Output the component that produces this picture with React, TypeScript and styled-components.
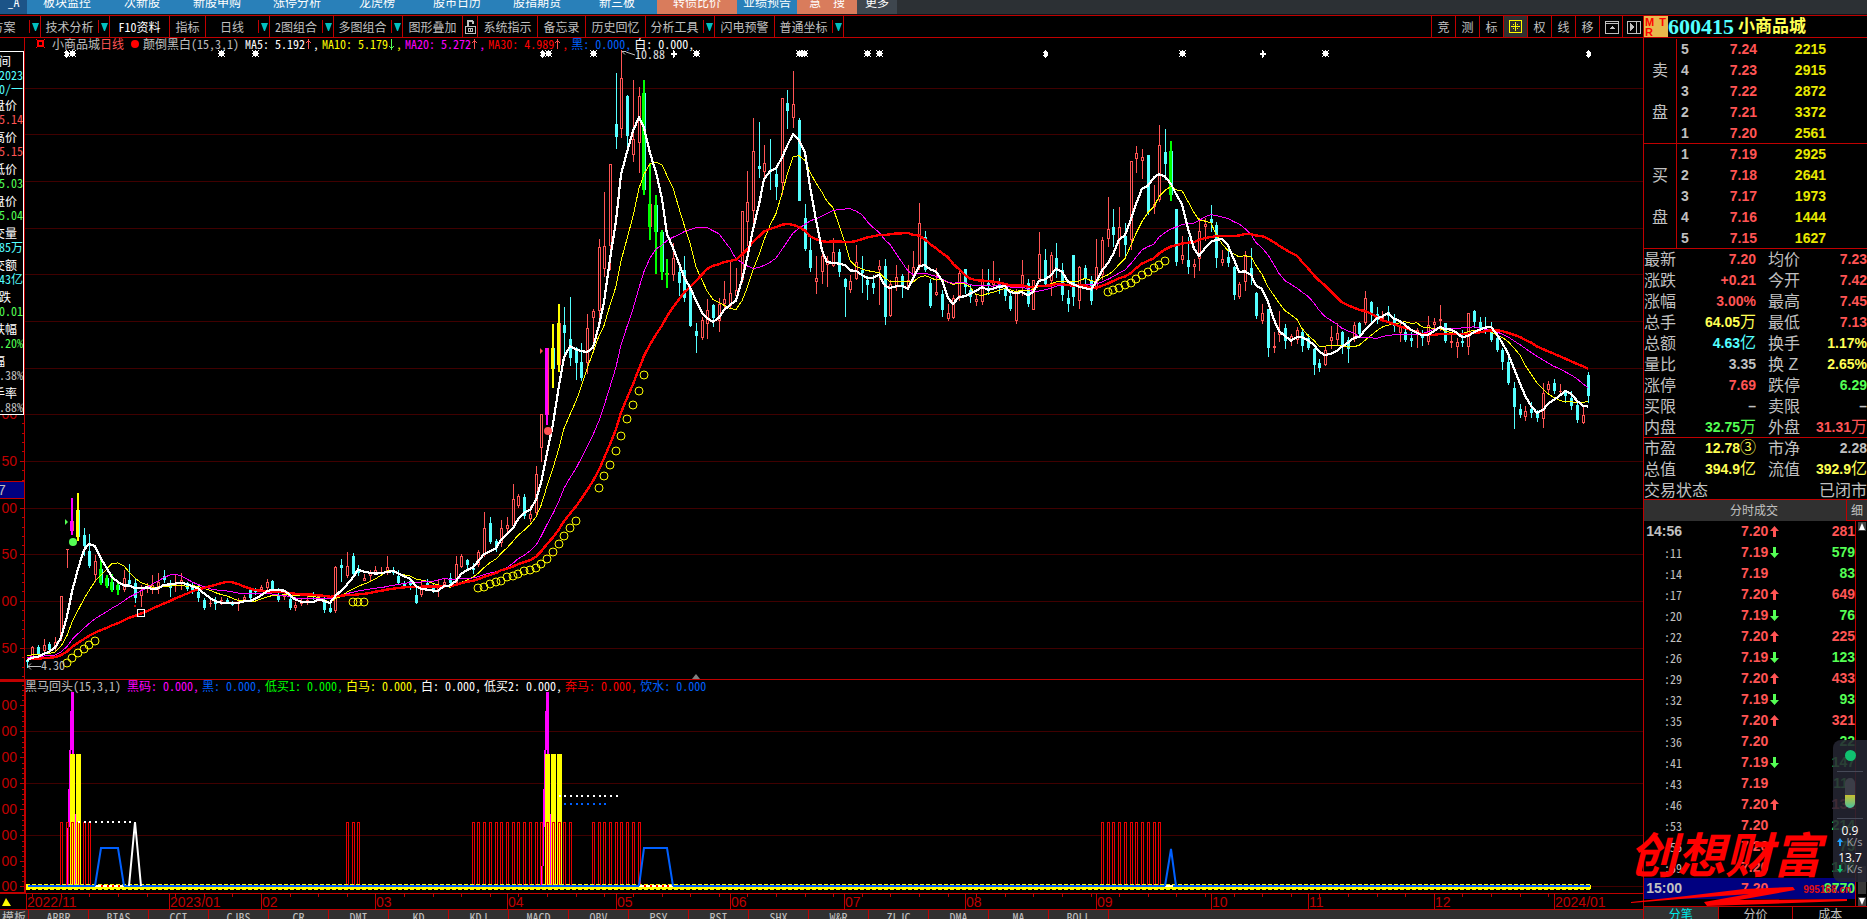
import React from "react";
import styled, { createGlobalStyle } from "styled-components";

const RED = "#c00000";
const SALMON = "#ff5454";
const CYAN = "#54ffff";
const GREEN = "#54ff54";
const YELLOW = "#ffff54";
const GRAY = "#c0c0c0";
const MONO = `"Noto Sans Mono CJK SC", "Liberation Mono", "Noto Sans CJK SC", monospace`;
const SANS = `"Liberation Sans", "Noto Sans CJK SC", sans-serif`;

const GlobalStyle = createGlobalStyle`
  *, *::before, *::after { box-sizing: border-box; }
  html, body { margin: 0; background: #000; }
  body { font-family: ${SANS}; font-size: 12px; color: ${GRAY}; }
  button { margin: 0; padding: 0; border: 0; background: none; color: inherit; font: inherit; }
  table { border-collapse: collapse; border-spacing: 0; }
  td, th { padding: 0; font-weight: inherit; }
`;

/* ---------- page frame ---------- */

const Page = styled.div`
  position: relative;
  display: flex;
  flex-direction: column;
  height: 100vh;
  overflow: hidden;
  background: #000;
`;

const MenuBar = styled.nav`
  display: flex;
  align-items: stretch;
  flex: none;
  height: 15px;
  overflow: hidden;
  background: #2c3034;
  border-bottom: 1px solid #101418;
`;

const MenuItem = styled.button<{ $w: number; $bg: string }>`
  width: ${(p) => p.$w}px;
  background: ${(p) => p.$bg};
  color: #fff;
  font-family: ${MONO};
  line-height: 16px;
  height: 16px;
  margin-top: -6px;
  padding-bottom: 6px;
  box-sizing: content-box;
  white-space: pre;
`;

const Body = styled.div`
  display: flex;
  flex: 1;
  min-height: 0;
  border-top: 1px solid ${RED};
`;

const Workspace = styled.main`
  display: flex;
  flex-direction: column;
  flex: 1;
  min-width: 0;
  overflow: hidden;
`;

/* ---------- tool bar ---------- */

const ToolBar = styled.div`
  display: flex;
  flex: none;
  height: 22px;
  margin-left: -22px;
  border-bottom: 1px solid ${RED};
  font-family: ${MONO};
`;

const Tool = styled.button<{ $w: number; $bright?: boolean }>`
  display: flex;
  align-items: center;
  justify-content: center;
  flex: none;
  width: ${(p) => p.$w}px;
  border-right: 1px solid ${RED};
  color: ${(p) => (p.$bright ? "#fff" : GRAY)};
  white-space: nowrap;
`;

const ToolText = styled.span`
  flex: 1;
  text-align: center;
`;

const Drop = styled.span`
  display: flex;
  align-items: center;
  justify-content: center;
  width: 11px;
  height: 13px;
  border-left: 1px solid ${RED};
`;

const Spacer = styled.div`
  flex: 1;
`;

const IconTool = styled.button<{ $on?: boolean }>`
  display: flex;
  align-items: center;
  justify-content: center;
  flex: none;
  width: 24px;
  border-left: 1px solid ${RED};
  background: ${(p) => (p.$on ? "#303030" : "none")};
  &:nth-last-child(2) { width: 23px; }
  &:last-child { width: 21px; }
`;

/* ---------- charts ---------- */

const PricePanel = styled.section`
  position: relative;
  flex: 1;
  min-height: 0;
  border-bottom: 1px solid ${RED};
  overflow: hidden;
`;

const SubPanel = styled.section`
  position: relative;
  flex: none;
  height: 213px;
  overflow: hidden;
`;

const DateAxis = styled.div`
  flex: none;
  height: 17px;
  border-top: 1px solid ${RED};
  border-bottom: 1px solid ${RED};
  overflow: hidden;
`;

const Plot = styled.svg`
  display: block;
  width: 100%;
  height: 100%;
`;

const Legend = styled.div<{ $left: number }>`
  position: absolute;
  top: 0;
  left: ${(p) => p.$left}px;
  display: flex;
  gap: 3px;
  height: 12px;
  line-height: 12px;
  font-family: ${MONO};
  white-space: pre;
`;

const LegendItem = styled.span<{ $c: string }>`
  display: flex;
  align-items: center;
  color: ${(p) => p.$c};
`;

const LegendTitle = styled(LegendItem)`
  margin-right: 3px;
`;

const Period = styled.span`
  color: ${SALMON};
`;

const InfoBox = styled.div`
  position: absolute;
  left: 0;
  top: 13px;
  width: 24px;
  height: 364px;
  padding-top: 2px;
  background: #000;
  border: 1px solid #fff;
  border-left: 0;
  font-family: ${MONO};
  overflow: hidden;
`;

const InfoGroup = styled.div<{ $first?: boolean }>`
  display: flex;
  flex-direction: column;
  align-items: flex-end;
  margin-bottom: ${(p) => (p.$first ? 2 : 4)}px;
  line-height: 14px;
  white-space: nowrap;
`;

const InfoLabel = styled.span<{ $inset: number }>`
  margin-right: ${(p) => p.$inset}px;
  color: #fff;
`;

const InfoValue = styled.span<{ $c: string }>`
  color: ${(p) => p.$c};
`;

const Tabs = styled.div`
  display: flex;
  flex: none;
  height: 9px;
  overflow: hidden;
  background: #303030;
  font-family: ${MONO};
`;

const Tab = styled.button<{ $w: number }>`
  flex: none;
  width: ${(p) => p.$w}px;
  height: 18px;
  line-height: 14px;
  padding-bottom: 4px;
  border-right: 1px solid ${RED};
`;

/* ---------- quote panel ---------- */

const Quote = styled.aside`
  display: flex;
  flex-direction: column;
  flex: none;
  width: 224px;
  border-left: 1px solid ${RED};
`;

const QuoteHead = styled.header`
  display: flex;
  align-items: center;
  flex: none;
  height: 22px;
  border-bottom: 1px solid ${RED};
`;

const Badge = styled.div`
  display: grid;
  grid-template-columns: 1fr 1fr;
  width: 24px;
  height: 21px;
  padding: 1px;
  background: #e8b84c;
  color: #ff0000;
  font-size: 11px;
  font-weight: bold;
  line-height: 10px;
`;

const BadgeRight = styled.span`
  text-align: right;
  padding-right: 1px;
`;

const Code = styled.h1`
  margin: 0 4px 0 0;
  color: ${CYAN};
  font-family: "Liberation Serif", serif;
  font-size: 22px;
  line-height: 21px;
`;

const Name = styled.h2`
  margin: 0;
  color: ${YELLOW};
  font-size: 17px;
  line-height: 21px;
`;

const Book = styled.section`
  display: flex;
  flex: none;
  height: 105px;
  border-bottom: 1px solid ${RED};
  &:first-of-type { height: 106px; padding-top: 1px; }
`;

const BookSide = styled.div`
  display: flex;
  flex-direction: column;
  align-items: center;
  gap: 21px;
  width: 33px;
  padding-top: 21px;
  border-right: 1px solid ${RED};
  font-size: 16px;
  line-height: 21px;
`;

const BookTable = styled.table`
  width: 149px;
  height: 105px;
  table-layout: fixed;
  font-size: 14px;
  font-weight: bold;
  line-height: 21px;
`;

const Cell = styled.td<{ $c?: string; $align?: string; $pad?: number }>`
  height: 21px;
  text-align: ${(p) => p.$align || "right"};
  color: ${(p) => p.$c || GRAY};
  padding-left: ${(p) => p.$pad || 0}px;
  white-space: nowrap;
`;

const Col = styled.col<{ $w: number }>`
  width: ${(p) => p.$w}px;
`;

const Stats = styled.section<{ $h: number }>`
  flex: none;
  height: ${(p) => p.$h}px;
  border-bottom: 1px solid ${RED};
  overflow: hidden;
`;

const StatTable = styled.table`
  width: 100%;
  table-layout: fixed;
  font-size: 14px;
  font-weight: bold;
  line-height: 21px;
`;

const StatLabel = styled.th<{ $pad?: number }>`
  height: 21px;
  padding-left: ${(p) => p.$pad || 0}px;
  text-align: left;
  font-size: 16px;
  font-weight: normal;
  white-space: pre;
`;

const Unit = styled.span`
  font-size: 16px;
  font-weight: normal;
  line-height: 16px;
`;

const StateRow = styled.div`
  display: flex;
  justify-content: space-between;
  font-size: 16px;
  line-height: 21px;
`;

const DealHead = styled.div`
  display: flex;
  flex: none;
  height: 21px;
  background: #303030;
  line-height: 22px;
  text-align: center;
`;

const DealTitle = styled.div`
  flex: 1;
  padding-left: 18px;
`;

const DetailButton = styled.button`
  width: 21px;
  border-left: 1px solid ${RED};
  border-bottom: 1px solid ${RED};
`;

const DealArea = styled.section`
  display: flex;
  flex: 1;
  min-height: 0;
`;

const DealTable = styled.table`
  width: 211px;
  height: 378px;
  table-layout: fixed;
  font-size: 14px;
  font-weight: bold;
  line-height: 21px;
`;

const DealRow = styled.tr<{ $last?: boolean }>`
  background: ${(p) => (p.$last ? "#000080" : "none")};
`;

const TimeCell = styled(Cell)<{ $small: boolean }>`
  font-family: ${(p) => (p.$small ? MONO : SANS)};
  font-size: ${(p) => (p.$small ? 12 : 14)}px;
  font-weight: ${(p) => (p.$small ? "normal" : "bold")};
`;

const DealPrice = styled.span`
  display: flex;
  align-items: center;
  gap: 2px;
  height: 21px;
`;

const Scroll = styled.div`
  display: flex;
  flex-direction: column;
  justify-content: space-between;
  align-items: center;
  flex: 1;
  padding-top: 1px;
  border-left: 1px solid ${RED};
`;

const ScrollButton = styled.button`
  display: flex;
  width: 8px;
  height: 9px;
  background: #404040;
  align-items: center;
  justify-content: center;
`;

const Thumb = styled.div`
  width: 8px;
  height: 28px;
  margin: auto 0 3px;
  background: #383838;
`;

const QuoteTabs = styled.div`
  display: flex;
  flex: none;
  height: 13px;
  overflow: hidden;
  border-top: 1px solid ${RED};
`;

const QuoteTab = styled.button<{ $on?: boolean }>`
  flex: 1;
  height: 17px;
  line-height: 15px;
  border-right: 1px solid ${RED};
  background: ${(p) => (p.$on ? "#303030" : "none")};
  color: ${(p) => (p.$on ? "#00e8e8" : GRAY)};
  &:last-child { border-right: 0; }
`;

/* ---------- floating parts ---------- */

const Monitor = styled.div`
  position: absolute;
  right: 0;
  bottom: 37px;
  display: flex;
  flex-direction: column;
  align-items: center;
  width: 34px;
  height: 142px;
  padding-top: 10px;
  border-radius: 8px 0 0 8px;
  background: rgba(36, 38, 50, 0.88);
  color: #fff;
`;

const Dot = styled.div`
  width: 11px;
  height: 11px;
  border-radius: 6px;
  background: #10c070;
`;

const Rule = styled.div`
  width: 26px;
  height: 1px;
  margin: 10px 0 6px;
  background: #464a58;
`;

const Gauge = styled.div`
  display: flex;
  align-items: flex-end;
  width: 10px;
  height: 30px;
  border-radius: 5px;
  background: #3c3e48;
  overflow: hidden;
`;

const GaugeFill = styled.div`
  width: 10px;
  height: 13px;
  background: linear-gradient(#c8c030, #48c0a0);
`;

const Rate = styled.div<{ $unit?: boolean }>`
  display: flex;
  align-items: center;
  gap: 3px;
  font-family: "Open Sans", sans-serif;
  font-size: ${(p) => (p.$unit ? 11 : 12)}px;
  line-height: ${(p) => (p.$unit ? 10 : 12)}px;
  margin-bottom: ${(p) => (p.$unit ? 5 : 0)}px;
  color: ${(p) => (p.$unit ? "#a0a0a8" : "#fff")};
`;

const Stamp = styled.div`
  position: absolute;
  right: 16px;
  bottom: 10px;
  width: 222px;
  height: 88px;
  color: #ff0000;
`;

const StampText = styled.div`
  font-family: "Noto Sans CJK SC", sans-serif;
  font-size: 48px;
  font-weight: bold;
  font-style: italic;
  line-height: 62px;
`;

const StampStroke = styled.svg`
  position: absolute;
  left: 0;
  bottom: 0;
`;

const StampUrl = styled.a`
  position: absolute;
  right: 0;
  bottom: 12px;
  color: #e01010;
  font-size: 10px;
  font-weight: bold;
  line-height: 14px;
  text-decoration: none;
`;

/* ---------- data ---------- */

// high, body top, body bottom, low, kind (r rise, c fall; m, y, Y, g, G are marked bars)
const RAW = `658 660 662 668 c|646 647 658 660 r|645 647 655 656 c|639 645 651 654 r|642 644 650 652 c|637 642 648 651 r|596 596 637 641 r|549 549 550 568 r|498 521 531 535 m|493 510 537 541 y
528 535 546 556 c|534 551 566 568 c|555 561 575 582 r|557 569 583 585 g|575 578 586 588 g|574 582 590 592 g|581 585 590 595 g|570 578 590 592 r|564 580 584 587 c|579 583 598 603 c
585 590 596 607 r|583 587 588 593 r|575 585 588 594 r|573 582 588 594 r|570 576 580 583 c|580 585 588 597 c|575 583 585 592 r|573 580 583 590 r|582 583 589 591 c|583 586 592 594 c
585 592 598 602 c|598 600 608 610 c|599 603 604 607 r|597 602 604 610 c|597 600 601 605 r|598 600 602 604 c|601 604 605 606 c|598 603 604 611 r|595 597 600 602 r|587 589 598 601 c
588 590 592 595 c|585 587 590 591 r|579 582 588 590 r|580 581 590 592 c|588 595 600 602 c|592 594 597 600 r|597 599 608 610 c|602 605 608 611 r|598 601 604 606 r|594 600 603 605 r
592 594 597 600 c|594 596 599 601 r|595 602 610 613 c|602 608 612 613 c|566 567 611 613 r|559 565 568 582 c|552 566 576 578 r|553 556 574 577 c|565 569 573 576 c|574 578 581 581 r
570 573 576 582 r|566 570 573 575 r|567 572 573 575 r|556 567 572 575 r|567 572 573 575 c|570 576 583 585 c|581 583 586 588 c|578 581 585 590 c|588 595 603 604 c|582 588 595 597 r
579 583 586 588 c|584 587 591 593 c|580 585 590 597 r|578 582 585 587 r|573 578 583 587 c|556 564 583 585 r|554 556 567 568 r|559 560 565 570 c|563 568 570 574 c|550 552 565 567 r
512 528 555 557 r|517 523 542 544 c|539 541 548 552 c|520 528 543 547 r|517 525 529 532 r|484 499 526 528 r|494 496 506 508 r|494 497 516 519 c|506 514 519 522 r|466 474 513 515 r
414 414 448 462 r|348 348 415 425 m|324 348 369 388 y|304 323 365 372 Y|307 325 333 358 c|297 339 358 366 c|347 348 363 380 c|343 362 378 381 c|314 328 363 374 r|309 311 318 350 r
239 247 311 320 r|192 246 269 277 r|164 164 246 270 r|73 124 137 149 c|50 78 129 138 r|95 96 136 148 c|80 139 155 162 r|87 96 143 173 r|80 93 190 195 g|163 204 227 240 G
195 205 232 274 g|230 232 272 280 g|259 273 275 288 G|243 258 275 281 r|265 272 283 296 c|256 270 298 302 c|289 289 326 327 c|323 331 336 353 c|317 320 338 340 r|299 310 324 339 r
304 305 318 327 c|298 304 321 332 r|281 299 304 308 r|262 293 306 309 r|268 290 296 301 r|211 211 280 283 r|171 202 222 246 r|118 151 211 228 r|122 166 169 178 c|145 163 172 178 r
139 170 171 190 c|168 174 187 200 c|98 98 183 195 r|90 103 111 129 c|71 104 118 128 r|118 120 201 201 c|204 218 249 251 c|238 250 268 272 c|256 278 282 294 r|252 256 272 284 r
256 260 265 287 r|238 252 266 267 r|249 252 272 277 c|278 279 287 317 c|275 281 290 293 r|245 262 279 280 r|256 270 273 293 c|276 280 285 300 c|275 283 288 294 c|260 266 270 305 r
259 266 317 325 c|280 284 316 317 r|265 277 287 291 r|274 276 285 298 c|265 280 287 288 r|251 267 276 281 r|203 223 265 270 r|231 237 270 272 c|279 283 306 308 c|268 292 295 296 r
290 294 310 317 c|304 313 319 321 r|295 298 318 319 r|269 273 296 301 r|269 269 287 294 c|284 290 297 303 c|295 299 302 306 r|269 280 302 305 r|269 283 286 295 c|261 281 285 288 r
278 284 288 294 c|285 289 296 301 c|292 296 309 311 c|289 292 321 324 r|260 275 288 296 r|279 283 304 307 c|280 280 310 310 r|232 254 279 282 r|249 260 284 286 c|252 255 281 296 r
243 258 270 278 c|263 270 295 301 c|290 298 304 312 c|255 255 297 306 c|266 267 301 309 r|265 268 278 284 c|276 281 301 305 c|239 267 288 290 r|237 240 275 280 r|197 229 239 247 r
209 227 235 247 c|207 227 240 257 r|223 236 245 258 c|161 161 240 250 r|146 153 159 173 r|149 157 161 179 r|155 155 212 215 c|185 204 207 214 r|125 145 200 202 r|129 152 164 180 c
141 151 195 201 g|209 209 262 266 c|236 255 260 264 r|237 260 267 274 c|259 264 267 278 r|218 231 259 271 r|218 224 227 241 r|205 219 223 232 c|222 225 258 268 c|250 259 263 266 r
247 257 263 267 c|266 267 295 300 c|282 284 297 299 r|251 256 282 291 r|248 268 276 285 c|292 293 316 319 c|304 313 321 324 r|309 309 348 357 c|332 346 348 353 r|311 332 335 342 r
324 328 341 349 c|334 336 341 346 r|327 330 340 344 r|328 332 346 352 c|334 338 348 350 c|348 349 365 375 c|359 363 368 372 c|346 350 365 366 r|326 337 341 349 r|323 333 340 346 r
331 332 345 354 c|337 340 349 363 c|322 325 337 342 r|322 323 334 338 c|291 298 323 325 r|301 302 315 324 c|307 314 320 324 c|311 316 319 322 r|306 312 316 322 c|314 318 326 332 c
322 327 333 342 r|323 332 340 342 c|332 338 341 347 c|328 330 333 348 r|330 334 338 346 c|316 325 342 345 r|318 322 325 332 r|305 319 321 331 r|323 323 341 343 c|333 341 343 348 r
338 342 347 358 r|330 341 343 347 c|313 313 347 355 r|310 311 322 328 c|317 322 328 333 c|317 327 332 334 c|322 330 340 342 c|334 338 350 352 c|348 350 362 370 c|356 362 383 385 c
382 388 407 429 c|404 409 415 418 c|406 411 417 421 r|402 409 413 418 c|410 413 418 422 c|383 393 419 428 r|381 384 390 395 r|379 383 391 394 c|384 391 392 395 r|392 393 396 403 c
391 398 406 410 c|403 405 420 423 c|406 415 423 424 r|372 375 396 403 c`;

type Candle = { high: number; top: number; bot: number; low: number; kind: string };

const CANDLES: Candle[] = RAW.split(/[|\n]/).map((s) => {
  const p = s.trim().split(" ");
  return { high: +p[0], top: +p[1], bot: +p[2], low: +p[3], kind: p[4] };
});

const STEP = 5.7209;
const cx = (i: number) => Math.round(26.5 + i * STEP);
const CLOSES = CANDLES.map((c) => ("rmYG".includes(c.kind) ? c.top : c.bot));

function average(n: number, before: number) {
  return CLOSES.map((_, i) => {
    let sum = 0;
    for (let k = i - n + 1; k <= i; k++) sum += k < 0 ? before : CLOSES[k];
    return `${cx(i)},${(sum / n).toFixed(1)}`;
  }).join(" ");
}

const GRID = [88, 134, 181, 228, 274, 321, 368, 414, 461, 508, 554, 601, 648];

const RINGS: [number, number[]][] = [
  [7, [663, 658, 653, 649, 645, 641]],
  [57, [602, 602, 602]],
  [79, [588, 587, 584, 582, 581, 577, 576, 574, 571, 570, 568, 564, 559, 552, 544, 536, 528, 521]],
  [100, [488, 476, 465, 451, 436, 419, 405, 391, 375]],
  [189, [292, 290, 288, 285, 283, 279, 275, 272, 268, 265, 261]],
];

const STARS: [number, string][] = [
  [66, "d"], [72, "s"], [221, "s"], [255, "s"], [542, "d"], [548, "s"], [593, "s"], [673, "p"], [696, "s"],
  [799, "s"], [804, "s"], [867, "s"], [879, "s"], [1045, "d"], [1182, "s"], [1262, "p"], [1325, "s"], [1588, "d"],
];

const MONTHS: [number, string][] = [
  [26, "2022/11"], [169, "2023/01"], [261, "02"], [375, "03"], [507, "04"], [616, "05"], [730, "06"], [844, "07"],
  [965, "08"], [1096, "09"], [1211, "10"], [1308, "11"], [1434, "12"], [1554, "2024/01"],
];

const RED_RUNS: [number, number][] = [[6, 11], [56, 58], [78, 95], [99, 107], [188, 198]];

const SELL = [["5", "7.24", "2215"], ["4", "7.23", "2915"], ["3", "7.22", "2872"], ["2", "7.21", "3372"], ["1", "7.20", "2561"]];
const BUY = [["1", "7.19", "2925"], ["2", "7.18", "2641"], ["3", "7.17", "1973"], ["4", "7.16", "1444"], ["5", "7.15", "1627"]];

type Stat = [string, string, string, string, string, string];
const STATS_A: Stat[] = [
  ["最新", "7.20", SALMON, "均价", "7.23", SALMON],
  ["涨跌", "+0.21", SALMON, "今开", "7.42", SALMON],
  ["涨幅", "3.00%", SALMON, "最高", "7.45", SALMON],
  ["总手", "64.05万", YELLOW, "最低", "7.13", SALMON],
  ["总额", "4.63亿", CYAN, "换手", "1.17%", YELLOW],
  ["量比", "3.35", GRAY, "换 Z", "2.65%", YELLOW],
  ["涨停", "7.69", SALMON, "跌停", "6.29", GREEN],
  ["买限", "–", GRAY, "卖限", "–", GRAY],
  ["内盘", "32.75万", GREEN, "外盘", "31.31万", SALMON],
];
const STATS_B: Stat[] = [
  ["市盈", "12.78③", YELLOW, "市净", "2.28", GRAY],
  ["总值", "394.9亿", YELLOW, "流值", "392.9亿", YELLOW],
];

const DEALS: [string, string, string, string, string][] = [
  ["14:56", "7.20", "u", "281", "r"], [":11", "7.19", "d", "579", "g"], [":14", "7.19", "", "83", "g"],
  [":17", "7.20", "u", "649", "r"], [":20", "7.19", "d", "76", "g"], [":22", "7.20", "u", "225", "r"],
  [":26", "7.19", "d", "123", "g"], [":29", "7.20", "u", "433", "r"], [":32", "7.19", "d", "93", "g"],
  [":35", "7.20", "u", "321", "r"], [":36", "7.20", "", "22", "g"], [":41", "7.19", "d", "147", "g"],
  [":43", "7.19", "", "111", "g"], [":46", "7.20", "u", "131", "r"], [":53", "7.20", "", "214", "g"],
  [":56", "7.20", "", "75", "g"], [":59", "7.20", "", "108", "g"], ["15:00", "7.20", "", "8770", "g"],
];

const BLUE = "#2980b9";
const ORANGE = "#d97c5c";
const MENU: [string, number, string][] = [
  ["_A", 27, "#1c5488"], ["板块监控", 80, BLUE], ["次新股", 70, BLUE], ["新股申购", 80, BLUE], ["涨停分析", 80, BLUE],
  ["龙虎榜", 80, BLUE], ["股市日历", 80, BLUE], ["股指期货", 80, BLUE], ["新三板", 80, BLUE], ["转债比价", 80, ORANGE],
  ["业绩预告", 60, BLUE], ["慧  搜", 60, ORANGE], ["更多", 40, "#3e464e"],
];

const TOOLS: [string, number, boolean?][] = [
  ["方案", 63, true], ["技术分析", 69, true], ["F10资料", 60], ["指标", 36], ["日线", 64, true], ["2图组合", 64, true],
  ["多图组合", 69, true], ["图形叠加", 60], ["lock", 15], ["系统指示", 60], ["备忘录", 48], ["历史回忆", 60],
  ["分析工具", 69, true], ["闪电预警", 60], ["普通坐标", 69, true],
];

// label, values, value colour, gap between the label and the right edge
const INFO: [string, string[], string, number][] = [
  ["时间", ["2023", "0/一"], CYAN, 12], ["开盘价", ["5.14"], SALMON, 6], ["最高价", ["5.15"], SALMON, 6],
  ["最低价", ["5.03"], GREEN, 6], ["收盘价", ["5.04"], GREEN, 6], ["成交量", ["85万"], CYAN, 6],
  ["成交额", ["43亿"], CYAN, 6], ["涨跌", ["0.01"], GREEN, 12], ["涨跌幅", [".20%"], GREEN, 6],
  ["振幅", [".38%"], GRAY, 18], ["换手率", [".88%"], GRAY, 6],
];

const SUB_TABS = ["ARBR", "BIAS", "CCI", "CJBS", "CR", "DMI", "KD", "KDJ", "MACD", "OBV", "PSY", "RSI", "SHX", "W&R", "ZLJC", "DMA", "MA", "BOLL"];

/* ---------- icons ---------- */

const Caret = () => (
  <svg width="7" height="8" viewBox="0 0 7 8"><path d="M0 0h7L4 8H3z" fill="#00c0c0" /></svg>
);

const Lock = () => (
  <svg width="12" height="16" viewBox="0 0 12 16" fill="none" stroke={GRAY} shapeRendering="crispEdges">
    <path d="M3.5 7V2.500L4.500 1.500h3l1 1V5" strokeWidth="2" />
    <rect x="1" y="7.500" width="10" height="7" />
    <path d="M4 9.500h4v3H4z M6 9v4" />
  </svg>
);

const Trend = ({ up }: { up: boolean }) => (
  <svg width="8" height="13" viewBox="0 0 8 13" fill="none" stroke={up ? SALMON : GREEN} shapeRendering="crispEdges">
    {up ? <path d="M3.500 1v10M1 4.500h1M2 3.500h3M5 4.500h1" /> : <path d="M3.500 1v11M1 8.500h1M2 9.500h3M5 8.500h1" />}
  </svg>
);

const Arrow = ({ up }: { up: boolean }) => (
  <svg width="9" height="11" viewBox="0 0 9 11">
    {up ? <path d="M4.500 0L9 5H6v6H3V5H0z" fill={SALMON} /> : <path d="M4.500 11L0 6h3V0h3v6h3z" fill={GREEN} />}
  </svg>
);

const TargetIcon = () => (
  <svg width="15" height="15" viewBox="0 0 15 15" fill="none" stroke="#ffff00" shapeRendering="crispEdges">
    <rect x="1.500" y="1.500" width="12" height="12" />
    <path d="M7.500 3v9M3 7.500h9M5 5.500h1M9 5.500h1M5 9.500h1M9 9.500h1" />
  </svg>
);

const PanelIcon = () => (
  <svg width="15" height="14" viewBox="0 0 15 14" fill="none" stroke={GRAY} shapeRendering="crispEdges">
    <rect x="1" y="1" width="13" height="12" /><path d="M1 3.500h13" /><path d="M5 9l3-3 3 3z" fill={GRAY} stroke="none" />
  </svg>
);

const SideIcon = () => (
  <svg width="15" height="14" viewBox="0 0 15 14" fill="none" stroke={GRAY} shapeRendering="crispEdges">
    <rect x="1" y="1" width="13" height="12" /><path d="M10.500 1v12" /><path d="M4 3l5 4-5 4z" fill={GRAY} stroke="none" />
  </svg>
);

/* ---------- chart parts ---------- */

function CandleMark({ c, i }: { c: Candle; i: number }) {
  const x = cx(i);
  const h = Math.max(1, c.bot - c.top);
  if (c.kind === "r") {
    return (
      <g fill={SALMON}>
        <rect x={x} y={c.high} width="1" height={Math.max(0, c.top - c.high)} />
        <rect x={x} y={c.bot} width="1" height={Math.max(0, c.low - c.bot)} />
        {h < 3 ? <rect x={x - 1} y={c.top} width="3" height={h} /> : (
          <path d={`M${x - 1} ${c.top}h3v${h}h-3z M${x} ${c.top + 1}v${h - 2}h1v${2 - h}z`} fillRule="evenodd" />
        )}
      </g>
    );
  }
  if (c.kind === "c") {
    return (
      <g fill={CYAN}>
        <rect x={x} y={c.high} width="1" height={c.low - c.high} />
        <rect x={x - 1} y={c.top} width="3" height={h} />
      </g>
    );
  }
  const fill = c.kind === "m" ? "#ff00ff" : c.kind.toLowerCase() === "y" ? "#ffff00" : "#00ff00";
  const under = "mYG".includes(c.kind) ? SALMON : CYAN;
  return (
    <g>
      <rect x={x} y={c.top} width="2" height={h} fill={under} />
      <rect x={x - 1} y={c.high} width="2" height={c.low - c.high} fill={fill} />
      <rect x={x - 2} y={c.top} width="3" height={h} fill={fill} />
    </g>
  );
}

function Star({ x, kind }: { x: number; kind: string }) {
  if (kind === "p") return <path d={`M${x} 50h1v3h3v2h-3v3h-1v-3h-2v-2h2z M${x} 51h2v6h-2z`} fill="#fff" />;
  if (kind === "d") return <path d={`M${x} 50h1l2 3-1 1 1 1-2 3h-1l-2-3 1-1-1-1z`} fill="#fff" />;
  return (
    <g fill="#fff">
      <rect x={x - 2} y="51" width="5" height="5" />
      <path d={`M${x - 3} 50h1v1h-1z M${x} 50h1v1h-1z M${x + 3} 50h1v1h-1z M${x - 3} 53h1v1h-1z M${x + 3} 53h1v1h-1z M${x - 3} 56h1v1h-1z M${x} 56h1v1h-1z M${x + 3} 56h1v1h-1z`} />
    </g>
  );
}

function PriceChart() {
  return (
    <Plot>
      <g transform="translate(0 -38)">
        <g shapeRendering="crispEdges">
          {GRID.map((y) => <rect key={y} x="25" y={y} width="4000" height="1" fill="#400000" />)}
          <rect x="24" y="38" width="1" height="642" fill={RED} />
          {GRID.map((y) => <rect key={y} x="20" y={y} width="4" height="1" fill={RED} />)}
          {GRID.map((y) => [9, 19, 28, 37].map((d) => <rect key={y + d} x="22" y={y + d} width="2" height="1" fill={RED} />))}
        </g>
        <g fill={RED} fontFamily={SANS} fontSize="14" textAnchor="end">
          {GRID.slice(7).map((y, k) => <text key={y} x="17" y={y + 5}>{k % 2 ? "50" : "00"}</text>)}
        </g>
        <g shapeRendering="crispEdges">
          <rect x="-1" y="481" width="25" height="17" fill="#000080" stroke={RED} />
          {CANDLES.map((c, i) => <CandleMark key={i} c={c} i={i} />)}
        </g>
        <text x="-2" y="495" fill={GRAY} fontFamily={SANS} fontSize="14">7</text>
        <g fill="none" shapeRendering="crispEdges">
          <polyline points={average(10, 655)} stroke="#ffff00" />
          <polyline points={average(20, 657)} stroke="#ff00ff" />
          <polyline points={average(30, 659)} stroke="#ff0000" strokeWidth="2.4" />
          <polyline points={average(5, 660)} stroke="#ffffff" strokeWidth="2.2" />
        </g>
        <g fill="none" stroke="#ffff00">
          {RINGS.map(([start, ys]) => ys.map((y, k) => <circle key={start + k} cx={cx(start + k)} cy={y} r="4" />))}
        </g>
        <g shapeRendering="crispEdges">{STARS.map(([x, k]) => <Star key={x} x={x} kind={k} />)}</g>
        <circle cx="73" cy="542" r="4" fill={GREEN} />
        <circle cx="548" cy="431" r="4" fill={SALMON} />
        <path d="M65 519l3 3-3 3z" fill={GREEN} />
        <path d="M540 348l3 3-3 3z" fill={SALMON} />
        <rect x="137" y="609" width="7" height="7" fill="none" stroke="#fff" shapeRendering="crispEdges" />
        <path d="M134 605h2v2h-2z" fill={RED} />
        <path d="M692 679l4-5 4 5z" fill="#808080" />
        <path d="M28 666.500h13M28 666.500l3-3M28 666.500l3 3" stroke={GRAY} fill="none" />
        <path d="M622 51.500h4M622 51.500l3 3M626 52l9 3" stroke={GRAY} fill="none" />
        <g fontFamily={MONO} fontSize="12" fill={GRAY}>
          <text x="41" y="670">4.30</text>
          <text x="635" y="59" fill="#e0e0e0">10.88</text>
        </g>
      </g>
    </Plot>
  );
}

function SignalChart() {
  const base = 886;
  const dots = (from: number, to: number, y: number, c: string) =>
    Array.from({ length: to - from + 1 }, (_, k) => <rect key={c + y + k} x={cx(from + k)} y={y} width="2" height="2" fill={c} />);
  return (
    <Plot>
      <g transform="translate(0 -680)">
        <g shapeRendering="crispEdges">
          {[731, 783, 835, 886].map((y) => <rect key={y} x="25" y={y} width="4000" height="1" fill="#400000" />)}
          {[705, 731, 757, 783, 809, 835, 861, 886].map((y) => (
            <g key={y} fill={RED}>
              <rect x="20" y={y} width="4" height="1" />
              <rect x="22" y={y - 5} width="2" height="1" /><rect x="22" y={y - 10} width="2" height="1" />
              <rect x="22" y={y - 15} width="2" height="1" /><rect x="22" y={y - 20} width="2" height="1" />
            </g>
          ))}
          <path d="M0 680.500h24M24.500 680v213M0 892.500h24" stroke={RED} strokeWidth="2" />
        </g>
        <g fill={RED} fontFamily={SANS} fontSize="14" textAnchor="end">
          {[705, 731, 757, 783, 809, 835, 861, 886].map((y) => <text key={y} x="17" y={y + 5}>00</text>)}
        </g>
        <g shapeRendering="crispEdges" fill="none">
          {[8, 91].map((i) => <polyline key={i} points={`${cx(i) - 5},886 ${cx(i)},692 ${cx(i) + 4},886`} stroke="#ff00ff" strokeWidth="2" strokeLinejoin="bevel" />)}
          {[8, 91].map((i) => <rect key={i} x={cx(i) - 1} y="692" width="3" height="33" fill="#ff00ff" />)}
          {[8, 9, 91, 92, 93].map((i) => <rect key={i} x={cx(i) - 2} y="754" width="5" height="132" fill="#ffff00" />)}
          {RED_RUNS.map(([a, b]) =>
            Array.from({ length: b - a + 1 }, (_, k) => (
              <path key={a + k} d={`M${cx(a + k) - 1}.500 ${base}V822.500h2V${base}`} stroke="#e80000" />
            ))
          )}
          <path d={`M26 886.500H${cx(273) + 3}`} stroke="#ffff00" strokeWidth="6" strokeDasharray="4 2" />
          <path d={`M26 886.500H${cx(273) + 3}`} stroke="#ffff00" strokeWidth="4" />
          <path d={`M28 886H${cx(273) + 2}`} stroke="#0060ff" strokeWidth="2" />
        </g>
        <g shapeRendering="crispEdges">
          {dots(9, 18, 821, "#fff")}
          {dots(93, 103, 795, "#fff")}
          {dots(94, 101, 803, "#0060ff")}
          <path d={`M${cx(12)} 885h${cx(17) - cx(12)}v2h${cx(12) - cx(17)}z M${cx(107)} 885h${cx(113) - cx(107)}v2h${cx(107) - cx(113)}z M${cx(199)} 885h8v2h-8z`} fill="#fff" />
          {dots(13, 16, 885, "#f00")}
          {dots(108, 112, 885, "#f00")}
        </g>
        <g fill="none" strokeWidth="2">
          <polyline points={`${cx(18)},886 ${cx(19)},822 ${cx(20)},886`} stroke="#fff" />
          <g stroke="#0060ff">
            <polyline points={`${cx(12)},886 ${cx(13)},848 ${cx(16)},848 ${cx(17)},886`} />
            <polyline points={`${cx(107)},886 ${cx(108)},848 ${cx(112)},848 ${cx(113)},886`} />
            <polyline points={`${cx(199)},886 ${cx(200)},849 ${cx(201)},886`} />
          </g>
        </g>
      </g>
    </Plot>
  );
}

function Dates() {
  const ticks = Array.from({ length: 54 }, (_, k) => cx(k * 5 + 1));
  return (
    <Plot>
      <path d="M2 12L6 4l5 8z" fill="#ffff00" />
      <g fill={RED} shapeRendering="crispEdges">
        {ticks.map((x) => <rect key={x} x={x} y="0" width="1" height="3" />)}
        {MONTHS.map(([x]) => <rect key={x} x={x} y="0" width="1" height="15" />)}
      </g>
      <g fill={RED} fontFamily={SANS} fontSize="14">
        {MONTHS.map(([x, t]) => <text key={x} x={x + 1} y="13">{t}</text>)}
      </g>
    </Plot>
  );
}

/* ---------- quote parts ---------- */

function BookBlock({ side, rows }: { side: string; rows: string[][] }) {
  return (
    <Book>
      <BookSide><span>{side}</span><span>盘</span></BookSide>
      <BookTable>
        <colgroup><Col $w={20} /><Col $w={60} /><Col $w={69} /></colgroup>
        <tbody>
          {rows.map(([n, price, vol]) => (
            <tr key={n}>
              <Cell $align="left" $pad={4}>{n}</Cell>
              <Cell $c={SALMON}>{price}</Cell>
              <Cell $c="#e8e800">{vol}</Cell>
            </tr>
          ))}
        </tbody>
      </BookTable>
    </Book>
  );
}

function Amount({ text }: { text: string }) {
  const unit = /[万亿③]$/.test(text) ? text.slice(-1) : "";
  return <>{unit ? text.slice(0, -1) : text}{unit && <Unit>{unit}</Unit>}</>;
}

function StatRows({ rows }: { rows: Stat[] }) {
  return (
    <StatTable>
      <colgroup><Col $w={34} /><Col $w={78} /><Col $w={45} /><Col $w={66} /></colgroup>
      <tbody>
        {rows.map((r) => (
          <tr key={r[0]}>
            <StatLabel>{r[0]}</StatLabel>
            <Cell $c={r[2]}><Amount text={r[1]} /></Cell>
            <StatLabel $pad={12}>{r[3]}</StatLabel>
            <Cell $c={r[5]}><Amount text={r[4]} /></Cell>
          </tr>
        ))}
      </tbody>
    </StatTable>
  );
}

export default function App() {
  return (
    <Page>
      <GlobalStyle />
      <MenuBar>
        {MENU.map(([t, w, bg]) => <MenuItem key={t} $w={w} $bg={bg}>{t}</MenuItem>)}
      </MenuBar>
      <Body>
        <Workspace>
          <ToolBar>
            {TOOLS.map(([t, w, drop]) => (
              <Tool key={t} $w={w} $bright={t === "F10资料"} aria-label={t}>
                {t === "lock" ? <Lock /> : <ToolText>{t}</ToolText>}
                {drop && <Drop><Caret /></Drop>}
              </Tool>
            ))}
            <Spacer />
            <IconTool>竞</IconTool><IconTool>测</IconTool><IconTool>标</IconTool>
            <IconTool $on aria-label="十字光标"><TargetIcon /></IconTool>
            <IconTool>权</IconTool><IconTool>线</IconTool><IconTool>移</IconTool>
            <IconTool aria-label="副图"><PanelIcon /></IconTool>
            <IconTool aria-label="侧栏"><SideIcon /></IconTool>
          </ToolBar>

          <PricePanel>
            <PriceChart />
            <Legend $left={36}>
              <LegendTitle $c={GRAY}>
                <svg width="16" height="10" viewBox="0 0 16 10" shapeRendering="crispEdges">
                  <path d="M2 2h5v5h-5z" fill="none" stroke="#f00" strokeWidth="2" />
                  <path d="M0 0h1v1h-1z M8 0h1v1h-1z M0 8h1v1h-1z M8 8h1v1h-1z" fill="#f00" />
                </svg>
                小商品城<Period>日线</Period>
                <svg width="19" height="10" viewBox="0 0 19 10"><circle cx="11" cy="5" r="4" fill="#f00" /></svg>
                颠倒黑白(15,3,1)
              </LegendTitle>
              <LegendItem $c="#fff">MA5: 5.192<Trend up />,</LegendItem>
              <LegendItem $c="#ffff00">MA10: 5.179<Trend up={false} />,</LegendItem>
              <LegendItem $c="#ff00ff">MA20: 5.272<Trend up />,</LegendItem>
              <LegendItem $c="#ff0000">MA30: 4.989<Trend up />,</LegendItem>
              <LegendItem $c="#0060ff">黑: 0.000,</LegendItem>
              <LegendItem $c="#fff">白: 0.000,</LegendItem>
            </Legend>
            <InfoBox>
              {INFO.map(([label, values, c, inset], k) => (
                <InfoGroup key={label} $first={k === 0}>
                  <InfoLabel $inset={inset}>{label}</InfoLabel>
                  {values.map((v) => <InfoValue key={v} $c={c}>{v}</InfoValue>)}
                </InfoGroup>
              ))}
            </InfoBox>
          </PricePanel>

          <SubPanel>
            <SignalChart />
            <Legend $left={25}>
              <LegendTitle $c={GRAY}>黑马回头(15,3,1)</LegendTitle>
              <LegendItem $c="#ff00ff">黑码: 0.000,</LegendItem>
              <LegendItem $c="#0060ff">黑: 0.000,</LegendItem>
              <LegendItem $c="#00ff00">低买1: 0.000,</LegendItem>
              <LegendItem $c="#ffff00">白马: 0.000,</LegendItem>
              <LegendItem $c="#fff">白: 0.000,</LegendItem>
              <LegendItem $c="#fff">低买2: 0.000,</LegendItem>
              <LegendItem $c="#ff0000">奔马: 0.000,</LegendItem>
              <LegendItem $c="#0060ff">饮水: 0.000</LegendItem>
            </Legend>
          </SubPanel>
          <DateAxis><Dates /></DateAxis>
          <Tabs>
            <Tab $w={29}>模板</Tab>
            {SUB_TABS.map((t) => <Tab key={t} $w={60}>{t}</Tab>)}
          </Tabs>
        </Workspace>

        <Quote>
          <QuoteHead>
            <Badge><span>M</span><BadgeRight>T</BadgeRight><span>R</span></Badge>
            <Code>600415</Code>
            <Name>小商品城</Name>
          </QuoteHead>
          <BookBlock side="卖" rows={SELL} />
          <BookBlock side="买" rows={BUY} />
          <Stats $h={189}><StatRows rows={STATS_A} /></Stats>
          <Stats $h={62}>
            <StatRows rows={STATS_B} />
            <StateRow><span>交易状态</span><span>已闭市</span></StateRow>
          </Stats>
          <DealHead>
            <DealTitle>分时成交</DealTitle>
            <DetailButton>细</DetailButton>
          </DealHead>
          <DealArea>
            <DealTable>
              <colgroup><Col $w={38} /><Col $w={100} /><Col $w={73} /></colgroup>
              <tbody>
                {DEALS.map(([t, price, dir, vol, c]) => (
                  <DealRow key={t} $last={t === "15:00"}>
                    <TimeCell $small={t[0] === ":"}>{t}</TimeCell>
                    <Cell $c={SALMON} $pad={59}>
                      <DealPrice>{price}{dir && <Arrow up={dir === "u"} />}</DealPrice>
                    </Cell>
                    <Cell $c={c === "r" ? SALMON : GREEN}>{vol}</Cell>
                  </DealRow>
                ))}
              </tbody>
            </DealTable>
            <Scroll>
              <ScrollButton aria-label="向上"><svg width="6" height="7"><path d="M3 0l3 7H0z" fill="#fff" /></svg></ScrollButton>
              <Thumb />
              <ScrollButton aria-label="向下"><svg width="6" height="7"><path d="M0 0h6L3 7z" fill="#fff" /></svg></ScrollButton>
            </Scroll>
          </DealArea>
          <QuoteTabs>
            <QuoteTab $on>分笔</QuoteTab>
            <QuoteTab>分价</QuoteTab>
            <QuoteTab>成本</QuoteTab>
          </QuoteTabs>
        </Quote>
      </Body>

      <Stamp>
        <StampText>创想财富</StampText>
        <StampStroke width="220" height="24" viewBox="0 0 220 24">
          <path d="M2 17Q60 11 115 4L164 2l2 3L110 15l108-1v2L78 21l-3-4 45-8Q60 13 2 18z" fill="#ff0000" />
        </StampStroke>
        <StampUrl href="#995168">995168.cn</StampUrl>
      </Stamp>

      <Monitor>
        <Dot />
        <Rule />
        <Gauge><GaugeFill /></Gauge>
        <Rule />
        <Rate>0.9</Rate>
        <Rate $unit>
          <svg width="6" height="8"><path d="M3 0l3 4H4v4H2V4H0z" fill="#20a0ff" /></svg>K/s
        </Rate>
        <Rate>13.7</Rate>
        <Rate $unit>
          <svg width="6" height="8"><path d="M3 8L0 4h2V0h2v4h2z" fill="#10c070" /></svg>K/s
        </Rate>
      </Monitor>
    </Page>
  );
}
